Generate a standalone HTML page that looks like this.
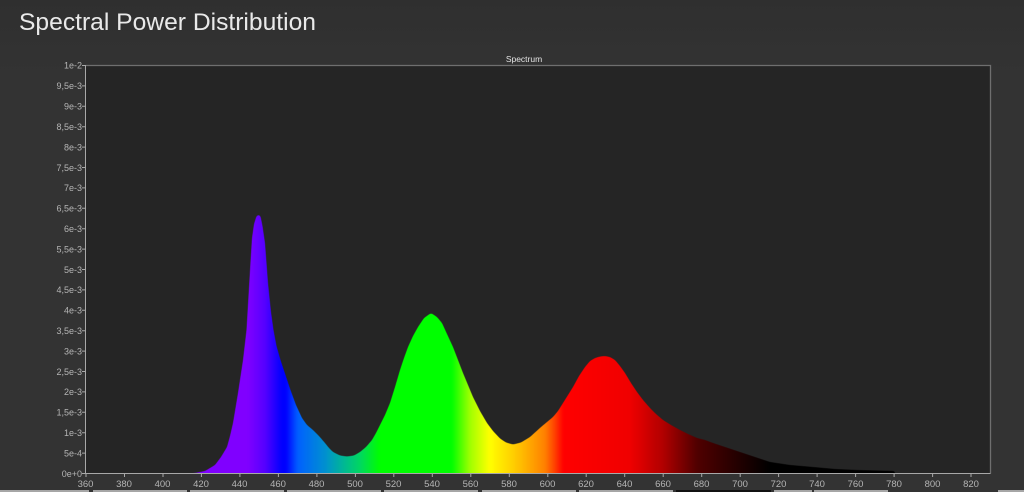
<!DOCTYPE html>
<html lang="en">
<head>
<meta charset="utf-8">
<title>Spectral Power Distribution</title>
<style>
html,body{margin:0;padding:0;background:#323232;width:1024px;height:492px;overflow:hidden}
svg{display:block}
text{font-family:"Liberation Sans",sans-serif}
</style>
</head>
<body>
<svg width="1024" height="492" viewBox="0 0 1024 492" xmlns="http://www.w3.org/2000/svg">
<defs>
<linearGradient id="bg" x1="0" y1="0" x2="0" y2="1">
<stop offset="0" stop-color="#2f2f2f"/><stop offset="0.15" stop-color="#333"/><stop offset="1" stop-color="#333"/>
</linearGradient>
<linearGradient id="sp" gradientUnits="userSpaceOnUse" x1="195" y1="0" x2="895" y2="0">
<stop offset="0" stop-color="#8000ff"/>
<stop offset="0.075" stop-color="#8000ff"/>
<stop offset="0.1" stop-color="#5500ff"/>
<stop offset="0.124" stop-color="#0000ff"/>
<stop offset="0.13" stop-color="#0000ff"/>
<stop offset="0.147" stop-color="#0060ff"/>
<stop offset="0.186" stop-color="#0090d0"/>
<stop offset="0.207" stop-color="#00b0a0"/>
<stop offset="0.236" stop-color="#00d860"/>
<stop offset="0.264" stop-color="#00ff00"/>
<stop offset="0.367" stop-color="#00ff00"/>
<stop offset="0.393" stop-color="#a0ff00"/>
<stop offset="0.421" stop-color="#ffff00"/>
<stop offset="0.464" stop-color="#ffc000"/>
<stop offset="0.5" stop-color="#ff8000"/>
<stop offset="0.514" stop-color="#ff4000"/>
<stop offset="0.526" stop-color="#ff0000"/>
<stop offset="0.621" stop-color="#f00000"/>
<stop offset="0.669" stop-color="#b00000"/>
<stop offset="0.717" stop-color="#500000"/>
<stop offset="0.779" stop-color="#200000"/>
<stop offset="0.821" stop-color="#000000"/>
<stop offset="1" stop-color="#000000"/>
</linearGradient>
<filter id="smooth" x="-3%" y="-5%" width="106%" height="110%" color-interpolation-filters="sRGB">
<feGaussianBlur stdDeviation="1.3"/>
<feComponentTransfer><feFuncA type="linear" slope="3.5" intercept="-1.25"/></feComponentTransfer>
<feGaussianBlur stdDeviation="0.35"/>
</filter>
<filter id="txt" x="-2%" y="-5%" width="104%" height="110%"><feGaussianBlur stdDeviation="0.25"/></filter>
<clipPath id="pl"><rect x="86" y="66" width="904" height="407.5"/></clipPath>
</defs>
<rect width="1024" height="492" fill="url(#bg)"/>
<rect x="85.500" y="65" width="905" height="408" fill="#252525"/>
<g clip-path="url(#pl)">
<g filter="url(#smooth)">
<path fill="url(#sp)" d="M190 482 L190 473.500 L195 473 L205 471 L215 465 L221 457 L227 447 L230 436 L233 423 L238 393 L243 360 L246.500 330 L248.500 296 L250.500 262 L252 238 L254 224 L256.500 216 L258.500 214.500 L260.500 216 L262.500 226 L265 243 L268 283 L271 312 L273.500 330 L276.500 346 L280.500 360 L285.500 375 L290.500 390 L296 405 L302 418 L307 425 L313 430 L319 436 L325 443 L329 448 L333 452 L340 455.500 L347 456.500 L354 455.500 L360 452 L366 447 L372 440 L376 433 L380 425 L385 415 L390 403 L395 387 L400 370 L404 358 L408 347 L413 336 L418 327 L424 318 L431 313 L437 317 L442 323 L447 334 L453 347 L458 360 L463 373 L468 385 L473 397 L480 411 L487 423 L493 431 L500 438.500 L506 442.500 L513 444.500 L521 442.500 L530 437 L541 427 L553 417 L558 411 L563 403 L568 395 L573 387 L579 376 L585 367 L590 361 L595 358 L600 356.500 L605 356 L610 357 L615 360 L620 366 L625 373 L631 383 L637 392 L643 400 L650 408 L656 414 L663 420 L671 425 L680 430 L688 434 L697 438 L705 440 L713 443 L725 447 L740 452 L755 457 L770 462 L790 465 L813 467 L835 469 L857 470 L895 471 L895 482 Z"/>
</g>
</g>
<g fill="none" stroke="#6f6f6f" stroke-width="1.3">
<path d="M85.500 65.500H990.500V473.500"/>
</g>
<path d="M85.500 65V473.500H990.500" fill="none" stroke="#a8a8a8" stroke-width="1"/>
<g filter="url(#txt)">
<text x="524" y="62" font-size="8.500" fill="#e4e4e4" text-anchor="middle">Spectrum</text>
<text x="19" y="30" font-size="24.500" fill="#e9e9e9" textLength="297" lengthAdjust="spacingAndGlyphs">Spectral Power Distribution</text>
</g>
<g stroke="#a8a8a8" stroke-width="1">
<path d="M82 65.500h3M82 85.900h3M82 106.300h3M82 126.700h3M82 147.100h3M82 167.500h3M82 187.900h3M82 208.300h3M82 228.700h3M82 249.100h3M82 269.500h3M82 289.900h3M82 310.300h3M82 330.700h3M82 351.100h3M82 371.500h3M82 391.900h3M82 412.300h3M82 432.700h3M82 453.100h3M82 473.500h3"/>
<path d="M86 473v4M124.500 473v4M163 473v4M201.400 473v4M239.900 473v4M278.400 473v4M316.900 473v4M355.400 473v4M393.800 473v4M432.300 473v4M470.800 473v4M509.300 473v4M547.800 473v4M586.200 473v4M624.700 473v4M663.200 473v4M701.700 473v4M740.200 473v4M778.600 473v4M817.100 473v4M855.600 473v4M894.100 473v4M932.600 473v4M971 473v4"/>
</g>
<g filter="url(#txt)">
<g font-size="9" fill="#b4b4b4" text-anchor="end">
<text x="82" y="68.500">1e-2</text>
<text x="82" y="89">9,5e-3</text>
<text x="82" y="109.500">9e-3</text>
<text x="82" y="130">8,5e-3</text>
<text x="82" y="150.500">8e-3</text>
<text x="82" y="171">7,5e-3</text>
<text x="82" y="191">7e-3</text>
<text x="82" y="211.500">6,5e-3</text>
<text x="82" y="232">6e-3</text>
<text x="82" y="252.500">5,5e-3</text>
<text x="82" y="273">5e-3</text>
<text x="82" y="293">4,5e-3</text>
<text x="82" y="313.500">4e-3</text>
<text x="82" y="334">3,5e-3</text>
<text x="82" y="354.500">3e-3</text>
<text x="82" y="375">2,5e-3</text>
<text x="82" y="395">2e-3</text>
<text x="82" y="415.500">1,5e-3</text>
<text x="82" y="436">1e-3</text>
<text x="82" y="456.500">5e-4</text>
<text x="82" y="477">0e+0</text>
</g>
<g font-size="9.500" fill="#b4b4b4" text-anchor="middle">
<text x="85.500" y="487">360</text>
<text x="124" y="487">380</text>
<text x="162.500" y="487">400</text>
<text x="201" y="487">420</text>
<text x="239.500" y="487">440</text>
<text x="278" y="487">460</text>
<text x="316.500" y="487">480</text>
<text x="355" y="487">500</text>
<text x="393.500" y="487">520</text>
<text x="432" y="487">540</text>
<text x="470.500" y="487">560</text>
<text x="509" y="487">580</text>
<text x="547.500" y="487">600</text>
<text x="586" y="487">620</text>
<text x="624.500" y="487">640</text>
<text x="663" y="487">660</text>
<text x="701.500" y="487">680</text>
<text x="740" y="487">700</text>
<text x="778.500" y="487">720</text>
<text x="817" y="487">740</text>
<text x="855.500" y="487">760</text>
<text x="894" y="487">780</text>
<text x="932.500" y="487">800</text>
<text x="971" y="487">820</text>
</g>
</g>
<g fill="#a6a6a6">
<rect x="0" y="490" width="89" height="2"/>
<rect x="93" y="490" width="94" height="2"/>
<rect x="190" y="490" width="94" height="2"/>
<rect x="287" y="490" width="94" height="2"/>
<rect x="384" y="490" width="94" height="2"/>
<rect x="482" y="490" width="94" height="2"/>
<rect x="579" y="490" width="94" height="2"/>
<rect x="774" y="490" width="38" height="2"/>
<rect x="814" y="490" width="74" height="2"/>
<rect x="998" y="490" width="26" height="2"/>
</g>
<rect x="676" y="490" width="95" height="2" fill="#111"/>
</svg>
</body>
</html>
